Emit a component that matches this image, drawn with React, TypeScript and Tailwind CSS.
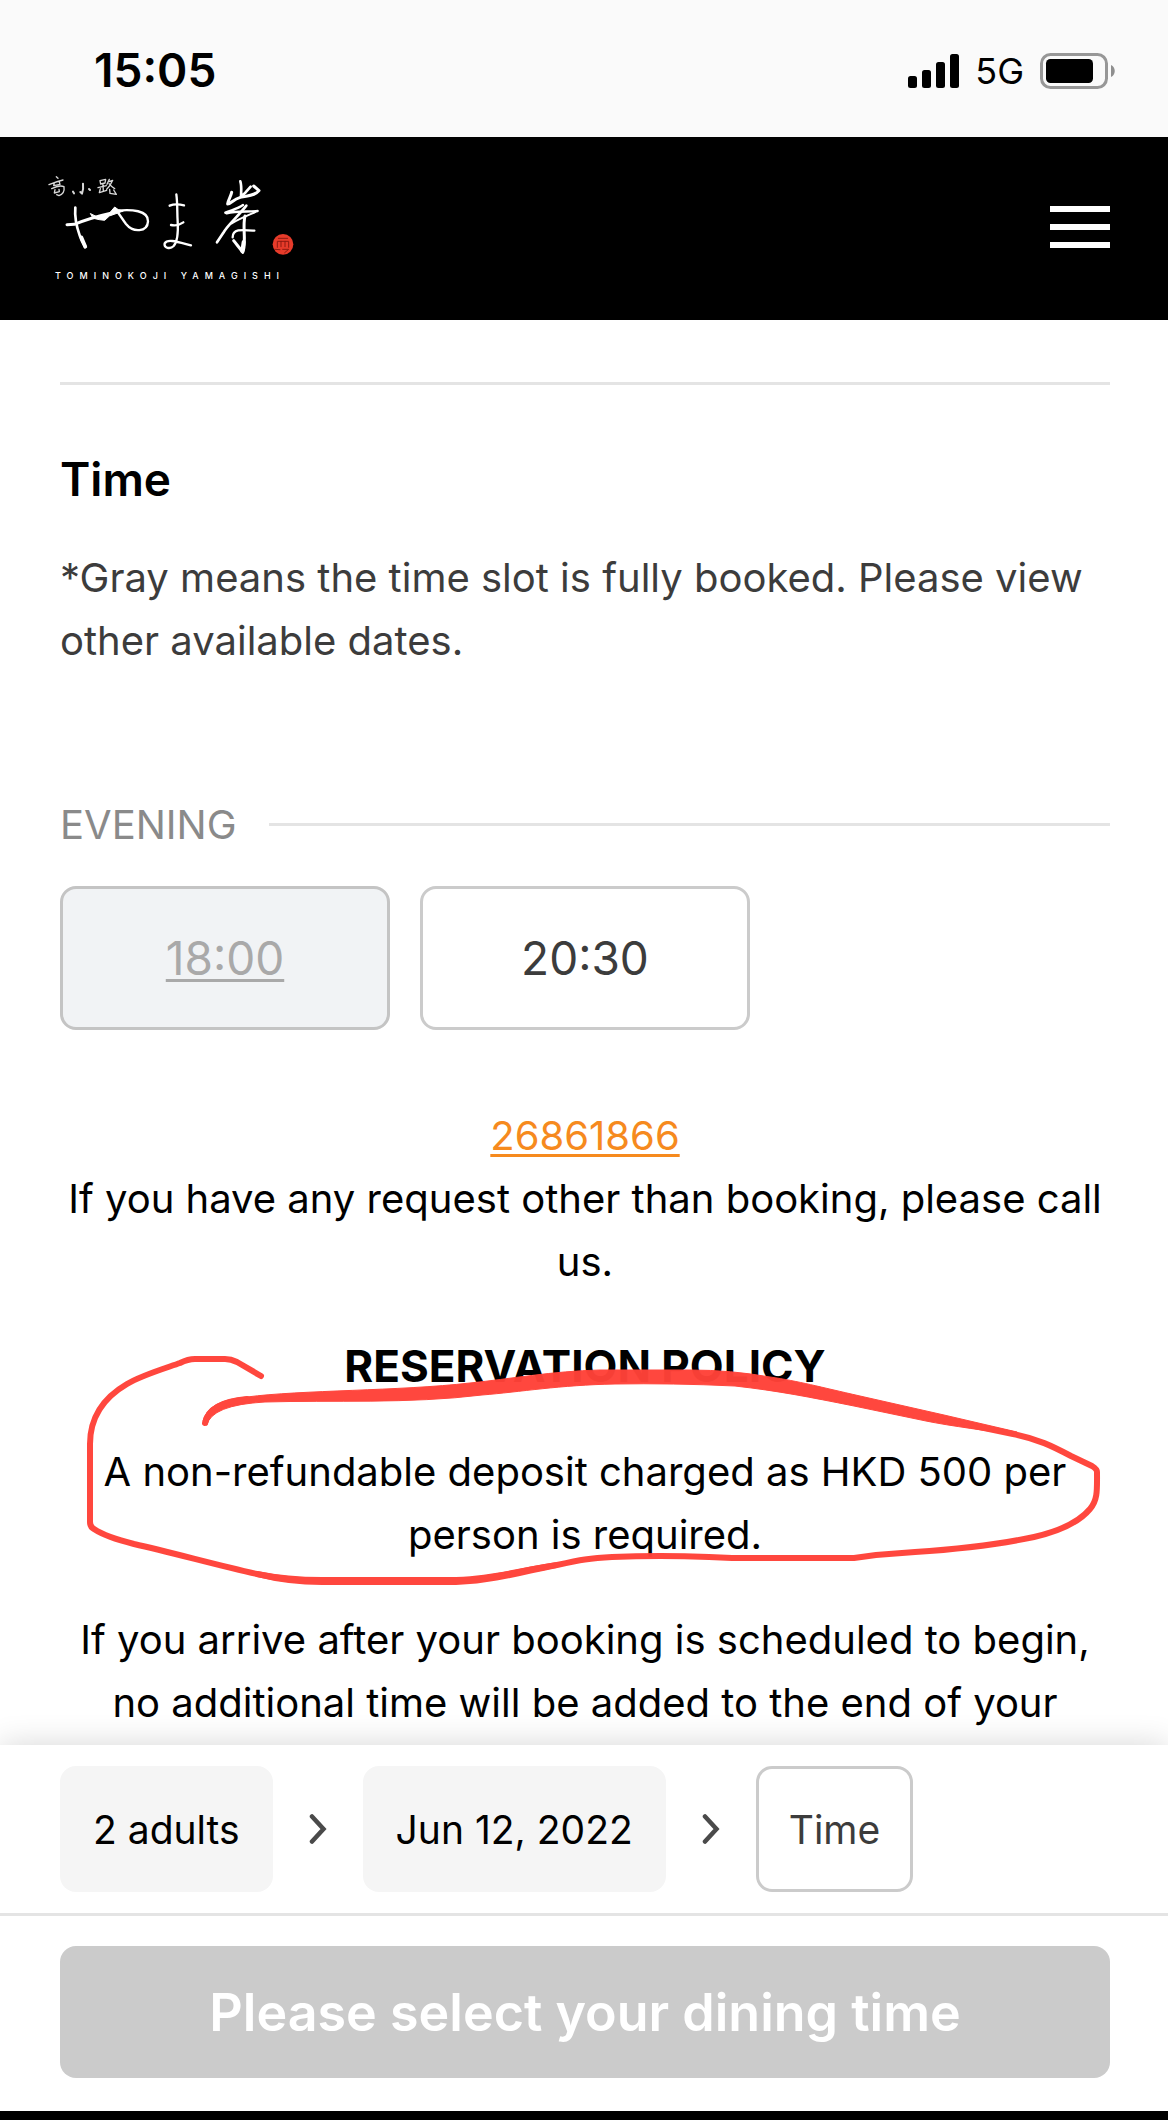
import { type ReactNode } from "react";

function SignalIcon() {
  return (
    <svg viewBox="0 0 51 34" className="h-[34px] w-[51px]" aria-hidden="true">
      <rect x="0" y="22" width="9" height="12" rx="2.5" />
      <rect x="14" y="16" width="9" height="18" rx="2.5" />
      <rect x="28" y="8" width="9" height="26" rx="2.5" />
      <rect x="42" y="0" width="9" height="34" rx="2.5" />
    </svg>
  );
}

function BatteryIcon() {
  return (
    <svg viewBox="0 0 75 36" className="h-9 w-[75px]" aria-hidden="true">
      <rect x="1.5" y="1.5" width="65" height="33" rx="9" fill="none" stroke="#979797" strokeWidth="3" />
      <rect x="6" y="6" width="47" height="24" rx="4.5" />
      <path d="M71 12 C76 14 76 22 71 24 Z" fill="#8f8f8f" />
    </svg>
  );
}

function BrandMark() {
  return (
    <svg
      viewBox="21 39 750 261"
      className="h-[87px] w-[250px]"
      fill="none"
      stroke="#fff"
      strokeLinecap="round"
      strokeLinejoin="round"
      aria-hidden="true"
    >
      <g strokeWidth="4" stroke="#d8d8d8">
        <path d="M49 50 L54 55 M27 74 Q48 65 69 60 M43 68 L41 77 L60 73 L58 66 M35 86 Q58 74 72 80 Q75 101 57 107 L50 104 M45 89 L43 99 L58 95 L57 88" />
        <path d="M99 95 L102 100 M129 71 Q131 88 126 101 L121 96 M147 87 L150 90" strokeWidth="6" />
        <path d="M180 62 L197 58 L195 69 L182 72 Z M189 74 L190 94 M174 83 L199 77 M181 86 L178 98 L200 91 M208 58 L201 73 M207 65 L218 61 Q211 78 200 88 M207 71 Q216 82 224 86 M209 88 L210 100 L229 103 L221 90" />
      </g>
      <path d="M106 143 C104 166 109 198 119 226 C124 242 130 252 135 261" strokeWidth="8" />
      <path d="M124 232 L136 260" strokeWidth="11" />
      <path d="M81 194 L103 193 C140 178 175 168 216 159" strokeWidth="9" />
      <path d="M152 161 L170 170 L207 161 L224 141 L235 149 L250 153 L208 168 L194 181 L178 179 L160 175 Z" fill="#fff" strokeWidth="3" />
      <path d="M230 152 C274 147 326 151 324 184 C322 217 279 218 258 192 C249 180 240 165 230 152" strokeWidth="7" />
      <path d="M409 103 C413 130 411 157 413 184 C415 218 412 245 401 258 C390 269 371 264 374 250 C382 235 414 246 453 256" strokeWidth="7" />
      <path d="M389 137 C403 131 417 132 432 136 M393 195 C407 198 420 194 430 187" strokeWidth="7" />
      <path d="M575 97 C573 110 562 124 563 132 C572 132 580 118 601 112 C624 108 646 106 657 92 L641 78" strokeWidth="9" />
      <path d="M601 64 C606 80 603 96 603 110 L616 98 L632 80" strokeWidth="8" />
      <path d="M556 158 C574 150 593 147 609 135 M560 160 C590 152 620 156 653 153" strokeWidth="7" />
      <path d="M619 137 C592 172 563 194 549 220 L531 247" strokeWidth="8" />
      <path d="M575 190 C590 180 614 170 646 156" strokeWidth="6" />
      <path d="M578 232 C578 206 604 209 643 212" strokeWidth="7" />
      <path d="M615 168 C609 192 614 220 613 243 Q613 265 608 277 C600 264 590 254 581 242" strokeWidth="9" />
      <path d="M611 246 L607 273" strokeWidth="12" />
      <circle cx="729" cy="253" r="31" fill="#e63b2a" stroke="none" />
      <path
        d="M712 262 V244 H746 V262 M723 244 V260 M735 244 V260 M715 235 H743 M704 268 L720 269 M728 268 H746 L734 278"
        stroke="#8e1a11"
        strokeWidth="3"
      />
    </svg>
  );
}

function ChevronIcon() {
  return (
    <svg viewBox="0 0 18 30" className="h-[30px] w-[18px]" aria-hidden="true">
      <path d="M3 2.5 L14.5 15 L3 27.5" fill="none" stroke="#4a4a4a" strokeWidth="4.5" strokeLinecap="round" />
    </svg>
  );
}

function PenCircle() {
  return (
    <svg
      viewBox="60 1335 1050 273"
      className="pointer-events-none absolute inset-x-0 top-0 w-full"
      fill="none"
      stroke="#ff4238"
      strokeLinecap="round"
      strokeLinejoin="round"
      opacity="0.97"
      aria-hidden="true"
    >
      <path
        d="M261 1376 L237 1362 Q231 1359 225 1359 L195 1359 Q188 1359 180 1363 C166 1368 142 1375 127 1384 C103 1398 90 1417 90 1444 L90 1522 Q90 1527 94 1529 C103 1535 118 1540 134 1544 C174 1553 220 1566 257 1574 Q288 1581 322 1581 L456 1581 C492 1580 522 1570 557 1565 C580 1560 590 1558 612 1557 Q660 1555 709 1557 L732 1558 L854 1558 L876 1555 L915 1552 C962 1549 1006 1543 1034 1537 C1060 1531 1080 1521 1090 1509 C1098 1500 1097 1489 1097 1472 Q1097 1469 1092 1466 L1071 1456 C1052 1446 1038 1439 1013 1434 L960 1423"
        strokeWidth="6"
      />
      <path
        d="M257 1571 Q288 1577 322 1577 L456 1577 C492 1576 522 1567 557 1562 L557 1568 C522 1575 492 1584 456 1585 L322 1585 Q288 1585 257 1577 Z"
        fill="#ff4238"
        stroke="none"
      />
      <path
        d="M203 1421 Q208 1400 247 1397 C300 1390 400 1391 470 1383 C510 1379 553 1371 600 1370 L690 1370 Q731 1370 770 1377 C798 1381 820 1387 860 1396 L944 1415 L1017 1432 L1017 1435 C990 1431 950 1426 926 1421 L854 1406 C809 1397 779 1391 735 1386 Q672 1383 615 1384 C560 1385 520 1392 482 1395 C410 1404 330 1400 265 1402 Q211 1405 207 1425 Z"
        fill="#ff4238"
        strokeWidth="1"
      />
      <path d="M205 1423 C208 1408 224 1401 247 1399" strokeWidth="6" />
    </svg>
  );
}

function TimeSlot({ time, disabled = false }: { time: string; disabled?: boolean }) {
  return (
    <button
      type="button"
      disabled={disabled}
      className={
        disabled
          ? "h-36 rounded-2xl border-3 border-[#c4c4c4] bg-[#f1f3f5] text-[46px] text-[#a9a9a9] underline decoration-3 underline-offset-4"
          : "h-36 rounded-2xl border-3 border-[#cbcbcb] bg-white text-[46px] text-[#3c3c3c]"
      }
    >
      {time}
    </button>
  );
}

function Step({ children, current = false }: { children: ReactNode; current?: boolean }) {
  return (
    <button
      type="button"
      className={
        current
          ? "h-[126px] rounded-2xl border-3 border-[#cbcbcb] px-[30px] text-[39px] text-[#3c3c3c]"
          : "h-[126px] rounded-2xl bg-[#f5f5f5] px-[33px] text-[39px] text-black"
      }
    >
      {children}
    </button>
  );
}

export default function App() {
  return (
    <div className="flex min-h-screen flex-col bg-white font-['Inter',sans-serif] text-[40px] leading-[63px] text-black">
      <div className="flex h-[137px] items-center justify-between bg-[#fafafa] pt-1 pr-[53px] pl-[94px]">
        <time className="text-[46px] font-semibold">15:05</time>
        <div className="flex items-center">
          <SignalIcon />
          <span className="ml-4 text-4xl">5G</span>
          <span className="ml-4 flex">
            <BatteryIcon />
          </span>
        </div>
      </div>

      <header className="flex h-[183px] items-center justify-between bg-black pr-[58px] pb-1 pl-[47px]">
        <a href="#home" aria-label="Tominokoji Yamagishi" className="flex flex-col pt-1 text-white">
          <BrandMark />
          <span className="mt-2 ml-2 text-[9px] leading-4 font-medium tracking-[6px]">TOMINOKOJI YAMAGISHI</span>
        </a>
        <button type="button" aria-label="Open menu" className="flex w-[60px] flex-col gap-3">
          <span className="h-1.5 bg-white" />
          <span className="h-1.5 bg-white" />
          <span className="h-1.5 bg-white" />
        </button>
      </header>

      <main className="flex-1 pr-[58px] pb-[9px] pl-[60px]">
        <hr className="mt-[62px] border-t-3 border-[#e4e4e4]" />
        <h2 className="mt-[63px] text-[46px] font-semibold">Time</h2>
        <p className="mt-[35px] text-[#3c3c3c]">
          *Gray means the time slot is fully booked. Please view other available dates.
        </p>
        <h3 className="mt-[121px] flex items-center gap-[32px] text-[#8a8a8a]">
          EVENING
          <span className="h-[3px] flex-1 bg-[#e4e4e4]" />
        </h3>
        <div className="mt-[30px] grid grid-cols-3 gap-[30px]">
          <TimeSlot time="18:00" disabled />
          <TimeSlot time="20:30" />
        </div>

        <div className="mt-[74px] text-center">
          <a href="tel:26861866" className="text-[#f68a1e] underline decoration-3 underline-offset-4">
            26861866
          </a>
          <p>If you have any request other than booking, please call us.</p>
        </div>

        <section className="relative mt-[42px] text-center">
          <h3 className="text-[44px] font-bold">RESERVATION POLICY</h3>
          <p className="mt-[42px]">A non-refundable deposit charged as HKD 500 per person is required.</p>
          <p className="mt-[42px]">
            If you arrive after your booking is scheduled to begin, no additional time will be added to the end of your
          </p>
          <PenCircle />
        </section>
      </main>

      <footer className="sticky bottom-0 border-b-9 border-black bg-white shadow-[0_0_30px_rgba(0,0,0,0.16)]">
        <nav aria-label="Booking steps" className="flex items-center gap-9 border-b-3 border-[#e4e4e4] py-[21px] pl-[60px]">
          <Step>2 adults</Step>
          <ChevronIcon />
          <Step>Jun 12, 2022</Step>
          <ChevronIcon />
          <Step current>Time</Step>
        </nav>
        <div className="pt-[30px] pr-[58px] pb-[33px] pl-[60px]">
          <button
            type="button"
            disabled
            className="h-[132px] w-full rounded-2xl bg-[#cbcbcb] text-[52px] font-semibold text-white"
          >
            Please select your dining time
          </button>
        </div>
      </footer>
    </div>
  );
}
